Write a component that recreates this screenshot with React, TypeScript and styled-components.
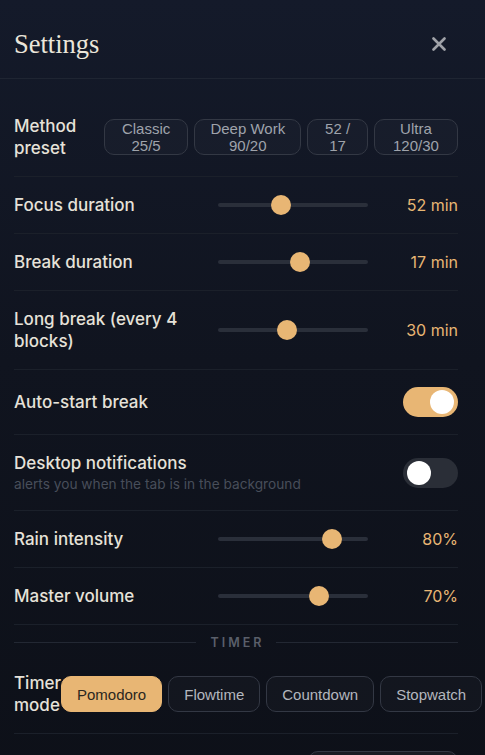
import React from "react";
import styled, { createGlobalStyle } from "styled-components";

const Global = createGlobalStyle`
  html, body { margin: 0; padding: 0; background: #0e121b; }
  body { font-family: Inter, "Noto Sans", sans-serif; -webkit-font-smoothing: antialiased; }
  * { box-sizing: border-box; }
`;

const ACCENT = "#e8b674";

const Panel = styled.div`
  width: 485px;
  min-height: 100vh;
  background: linear-gradient(180deg, #141a2a 0%, #10141f 45%, #0d1018 100%);
  display: flex;
  flex-direction: column;
`;

const Header = styled.header`
  display: flex;
  align-items: center;
  justify-content: space-between;
  padding: 27px 27px 17px 14px;
  border-bottom: 1px solid #1f2532;
`;

const Title = styled.h1`
  margin: 0;
  font-family: "Liberation Serif", "DejaVu Serif", serif;
  font-weight: 400;
  font-size: 26.5px;
  line-height: 34px;
  color: #ebe6da;
`;

const CloseButton = styled.button`
  background: none;
  border: none;
  padding: 0;
  width: 24px;
  height: 24px;
  display: flex;
  align-items: center;
  justify-content: center;
  color: #a0a2a8;
  margin-right: 7px;
`;

const Body = styled.div`
  padding: 19px 27px 0 14px;
  display: flex;
  flex-direction: column;
`;

const Row = styled.div<{ $gap?: number }>`
  display: flex;
  align-items: center;
  gap: ${(p) => p.$gap ?? 16}px;
  padding: 17px 0;
  border-bottom: 1px solid #1b202a;
`;

const Label = styled.div<{ $w?: number }>`
  flex: ${(p) => (p.$w !== undefined ? `0 0 ${p.$w}px` : "1 1 auto")};
  min-width: 0;
  font-size: 17px;
  line-height: 22px;
  font-weight: 500;
  color: #e6e2d9;
`;

const Sub = styled.div`
  font-size: 13.7px;
  line-height: 17px;
  margin-top: 2px;
  font-weight: 400;
  color: #484e5a;
`;

const ChipGroup = styled.div<{ $fill?: boolean }>`
  display: flex;
  gap: 6px;
  flex: ${(p) => (p.$fill ? "1 1 0" : "0 0 auto")};
  min-width: 0;
`;

const Chip = styled.button<{ $active?: boolean; $wrap?: boolean }>`
  flex: 0 1 auto;
  height: 36px;
  display: flex;
  align-items: center;
  justify-content: center;
  text-align: center;
  padding: 0 ${(p) => (p.$wrap ? 14 : 15)}px;
  border-radius: 10px;
  font-family: "Liberation Sans", Arial, sans-serif;
  font-size: 15px;
  line-height: 17px;
  white-space: ${(p) => (p.$wrap ? "normal" : "nowrap")};
  border: 1px solid ${(p) => (p.$active ? ACCENT : "#333844")};
  background: ${(p) => (p.$active ? ACCENT : "rgba(255,255,255,0.025)")};
  color: ${(p) => (p.$active ? "#2b2720" : p.$wrap ? "#9fa3ab" : "#b3b7be")};
`;

const SliderBox = styled.div`
  flex: 0 0 150px;
  height: 20px;
  position: relative;
  display: flex;
  align-items: center;
`;

const Track = styled.div`
  width: 100%;
  height: 4px;
  border-radius: 2px;
  background: #2a2f3a;
`;

const Thumb = styled.div`
  position: absolute;
  top: 0;
  width: 20px;
  height: 20px;
  border-radius: 50%;
  background: ${ACCENT};
`;

const Value = styled.div`
  flex: 0 0 74px;
  text-align: right;
  font-size: 16px;
  line-height: 22px;
  font-weight: 400;
  color: ${ACCENT};
`;

const Toggle = styled.div<{ $on: boolean }>`
  flex: 0 0 55px;
  height: 30px;
  border-radius: 15px;
  padding: 3px 4px;
  display: flex;
  justify-content: ${(p) => (p.$on ? "flex-end" : "flex-start")};
  background: ${(p) => (p.$on ? ACCENT : "#2a2e37")};
`;

const Knob = styled.div`
  width: 24px;
  height: 24px;
  border-radius: 50%;
  background: #ffffff;
`;

const Section = styled.div`
  display: flex;
  align-items: center;
  gap: 15px;
  padding: 10px 0 5px;
`;

const SectionLine = styled.div`
  flex: 1;
  height: 1px;
  background: #232833;
`;

const SectionText = styled.div`
  font-size: 12.5px;
  line-height: 15px;
  font-weight: 600;
  letter-spacing: 3px;
  color: #5a5f6a;
  margin-right: -3px;
`;

const Select = styled.div`
  flex: 0 0 150px;
  height: 36px;
  border-radius: 10px;
  border: 1px solid #333844;
  background: #181b23;
  display: flex;
  align-items: center;
  padding: 0 12px;
  font-family: "Liberation Sans", Arial, sans-serif;
  font-size: 15px;
  color: #b9bcc2;
`;

function SliderRow({ label, value, frac }: { label: string; value: string; frac: number }) {
  return (
    <Row>
      <Label>{label}</Label>
      <SliderBox>
        <Track />
        <Thumb style={{ left: `${frac * 130}px` }} />
      </SliderBox>
      <Value>{value}</Value>
    </Row>
  );
}

function ToggleRow({ label, sub, on }: { label: string; sub?: string; on: boolean }) {
  return (
    <Row>
      <Label>
        {label}
        {sub && <Sub>{sub}</Sub>}
      </Label>
      <Toggle $on={on}>
        <Knob />
      </Toggle>
    </Row>
  );
}

export default function App() {
  return (
    <>
      <Global />
      <Panel>
        <Header>
          <Title>Settings</Title>
          <CloseButton aria-label="Close">
            <svg width="14" height="14" viewBox="0 0 14 14">
              <path d="M1.5 1.5 L12.5 12.5 M12.5 1.5 L1.5 12.5" stroke="currentColor" strokeWidth="2.6" strokeLinecap="round" />
            </svg>
          </CloseButton>
        </Header>
        <Body>
          <Row $gap={12}>
            <Label $w={78}>Method preset</Label>
            <ChipGroup $fill>
              <Chip $wrap>Classic 25/5</Chip>
              <Chip $wrap>Deep{"\u00a0"}Work 90/20</Chip>
              <Chip $wrap>52 / 17</Chip>
              <Chip $wrap>Ultra 120/30</Chip>
            </ChipGroup>
          </Row>
          <SliderRow label="Focus duration" value="52 min" frac={(52 - 5) / 115} />
          <SliderRow label="Break duration" value="17 min" frac={(17 - 1) / 29} />
          <SliderRow label="Long break (every 4 blocks)" value="30 min" frac={(30 - 5) / 55} />
          <ToggleRow label="Auto-start break" on />
          <ToggleRow label="Desktop notifications" sub="alerts you when the tab is in the background" on={false} />
          <SliderRow label="Rain intensity" value="80%" frac={0.8} />
          <SliderRow label="Master volume" value="70%" frac={0.7} />
          <Section>
            <SectionLine />
            <SectionText>TIMER</SectionText>
            <SectionLine />
          </Section>
          <Row $gap={12}>
            <Label $w={35}>Timer mode</Label>
            <ChipGroup>
              <Chip $active>Pomodoro</Chip>
              <Chip>Flowtime</Chip>
              <Chip>Countdown</Chip>
              <Chip>Stopwatch</Chip>
            </ChipGroup>
          </Row>
          <Row>
            <Label>Ambient sound</Label>
            <Select>Rain</Select>
          </Row>
        </Body>
      </Panel>
    </>
  );
}
